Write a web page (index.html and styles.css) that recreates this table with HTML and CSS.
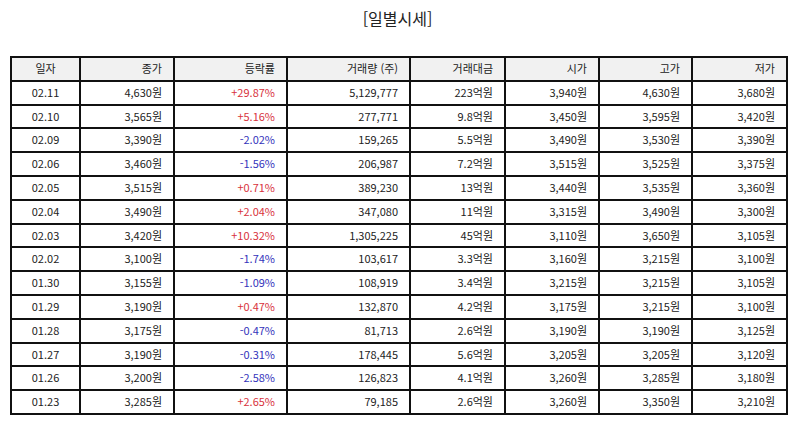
FILE: index.html
```html
<!DOCTYPE html>
<html lang="ko">
<head>
<meta charset="utf-8">
<link rel="stylesheet" href="styles.css">
</head>
<body>
<div class="page">
  <h1 class="title">[일별시세]</h1>
  <table class="price-table">
    <colgroup>
      <col class="c-date"><col class="c-close"><col class="c-rate"><col class="c-vol"><col class="c-amt"><col class="c-open"><col class="c-high"><col class="c-low">
    </colgroup>
    <thead>
      <tr><th class="center">일자</th><th>종가</th><th>등락률</th><th>거래량 (주)</th><th>거래대금</th><th>시가</th><th>고가</th><th>저가</th></tr>
    </thead>
    <tbody>
      <tr><td class="center">02.11</td><td>4,630원</td><td class="up">+29.87%</td><td>5,129,777</td><td>223억원</td><td>3,940원</td><td>4,630원</td><td>3,680원</td></tr>
      <tr><td class="center">02.10</td><td>3,565원</td><td class="up">+5.16%</td><td>277,771</td><td>9.8억원</td><td>3,450원</td><td>3,595원</td><td>3,420원</td></tr>
      <tr><td class="center">02.09</td><td>3,390원</td><td class="down">-2.02%</td><td>159,265</td><td>5.5억원</td><td>3,490원</td><td>3,530원</td><td>3,390원</td></tr>
      <tr><td class="center">02.06</td><td>3,460원</td><td class="down">-1.56%</td><td>206,987</td><td>7.2억원</td><td>3,515원</td><td>3,525원</td><td>3,375원</td></tr>
      <tr><td class="center">02.05</td><td>3,515원</td><td class="up">+0.71%</td><td>389,230</td><td>13억원</td><td>3,440원</td><td>3,535원</td><td>3,360원</td></tr>
      <tr><td class="center">02.04</td><td>3,490원</td><td class="up">+2.04%</td><td>347,080</td><td>11억원</td><td>3,315원</td><td>3,490원</td><td>3,300원</td></tr>
      <tr><td class="center">02.03</td><td>3,420원</td><td class="up">+10.32%</td><td>1,305,225</td><td>45억원</td><td>3,110원</td><td>3,650원</td><td>3,105원</td></tr>
      <tr><td class="center">02.02</td><td>3,100원</td><td class="down">-1.74%</td><td>103,617</td><td>3.3억원</td><td>3,160원</td><td>3,215원</td><td>3,100원</td></tr>
      <tr><td class="center">01.30</td><td>3,155원</td><td class="down">-1.09%</td><td>108,919</td><td>3.4억원</td><td>3,215원</td><td>3,215원</td><td>3,105원</td></tr>
      <tr><td class="center">01.29</td><td>3,190원</td><td class="up">+0.47%</td><td>132,870</td><td>4.2억원</td><td>3,175원</td><td>3,215원</td><td>3,100원</td></tr>
      <tr><td class="center">01.28</td><td>3,175원</td><td class="down">-0.47%</td><td>81,713</td><td>2.6억원</td><td>3,190원</td><td>3,190원</td><td>3,125원</td></tr>
      <tr><td class="center">01.27</td><td>3,190원</td><td class="down">-0.31%</td><td>178,445</td><td>5.6억원</td><td>3,205원</td><td>3,205원</td><td>3,120원</td></tr>
      <tr><td class="center">01.26</td><td>3,200원</td><td class="down">-2.58%</td><td>126,823</td><td>4.1억원</td><td>3,260원</td><td>3,285원</td><td>3,180원</td></tr>
      <tr><td class="center">01.23</td><td>3,285원</td><td class="up">+2.65%</td><td>79,185</td><td>2.6억원</td><td>3,260원</td><td>3,350원</td><td>3,210원</td></tr>
    </tbody>
  </table>
</div>
</body>
</html>
```

FILE: styles.css
```css
html, body {
  margin: 0;
  padding: 0;
  background: #ffffff;
}

body {
  font-family: "Noto Sans CJK KR", "Noto Sans", sans-serif;
  color: #222222;
}

.page {
  padding: 6px 9px 0 10px;
}

.title {
  margin: 0;
  height: 24px;
  line-height: 24px;
  font-size: 16px;
  font-weight: normal;
  text-align: center;
  color: #222222;
}

.price-table {
  margin-top: 26px;
  width: 776px;
  border-collapse: collapse;
  table-layout: fixed;
  font-size: 11px;
}

.c-date { width: 69px; }
.c-close { width: 94px; }
.c-rate { width: 113px; }
.c-vol { width: 123px; }
.c-amt { width: 95px; }
.c-open { width: 94px; }
.c-high { width: 93px; }
.c-low { width: 95px; }

.price-table th,
.price-table td {
  border: 2px solid #111111;
  height: 21.8px;
  padding: 0 11px 0 4px;
  text-align: right;
  font-weight: normal;
  color: #222222;
  line-height: 21.8px;
  white-space: nowrap;
}

.price-table th {
  background: #f1f1f1;
}

.price-table .center {
  text-align: center;
  padding: 0;
}

.price-table .up {
  color: #d8323c;
}

.price-table .down {
  color: #3333bb;
}
```
